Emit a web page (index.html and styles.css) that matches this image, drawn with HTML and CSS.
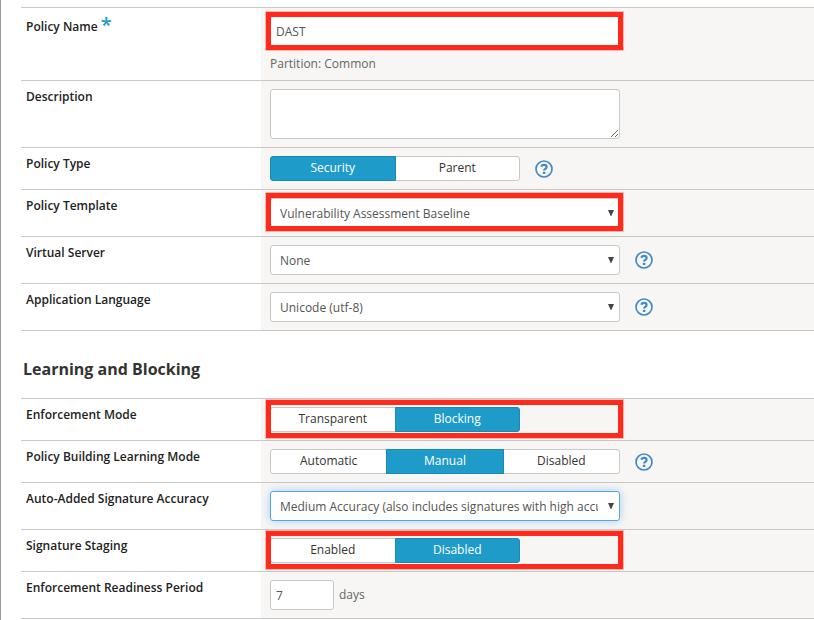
FILE: index.html
```html
<!DOCTYPE html>
<html lang="en">
<head>
<meta charset="utf-8">
<title>Create Policy</title>
<link rel="stylesheet" href="styles.css">
</head>
<body>
<svg class="defs" aria-hidden="true">
  <symbol id="help" viewBox="0 0 18 18">
    <circle cx="9" cy="9" r="8" fill="none" stroke="currentColor" stroke-width="1.7"/>
    <path d="M6.400 6.800C6.700 5.500 7.700 4.900 9 4.900c1.500 0 2.600.8 2.600 2.100 0 1.900-2.500 1.800-2.500 3.600" fill="none" stroke="currentColor" stroke-width="2.200"/>
    <rect x="7.900" y="11.700" width="2.400" height="2.400" rx=".5" fill="currentColor"/>
  </symbol>
  <symbol id="arrow" viewBox="0 0 6 6"><path d="M0 0h6L3.300 6h-.6z" fill="currentColor"/></symbol>
</svg>
<form class="page">
  <section class="rows">
    <div class="row">
      <div class="name name-required"><label for="policy-name">Policy Name</label><span class="required">*</span></div>
      <div class="value">
        <div class="field mark"><input class="box" id="policy-name" type="text" value="DAST"></div>
        <p class="note">Partition: Common</p>
      </div>
    </div>
    <div class="row">
      <div class="name"><label for="description">Description</label></div>
      <div class="value"><div class="field"><textarea class="box area" id="description"></textarea></div></div>
    </div>
    <div class="row">
      <div class="name" id="type-label">Policy Type</div>
      <div class="value line">
        <div class="segments pair" role="group" aria-labelledby="type-label"><button class="segment" type="button" aria-pressed="true">Security</button><button class="segment" type="button" aria-pressed="false">Parent</button></div>
        <button class="help" type="button" aria-label="Help"><svg><use href="#help"/></svg></button>
      </div>
    </div>
    <div class="row">
      <div class="name"><label for="template">Policy Template</label></div>
      <div class="value"><div class="field mark mark-select"><select class="box select" id="template"><option>Vulnerability Assessment Baseline</option></select><svg class="arrow"><use href="#arrow"/></svg></div></div>
    </div>
    <div class="row">
      <div class="name"><label for="server">Virtual Server</label></div>
      <div class="value line">
        <div class="field"><select class="box select" id="server"><option>None</option></select><svg class="arrow"><use href="#arrow"/></svg></div>
        <button class="help" type="button" aria-label="Help"><svg><use href="#help"/></svg></button>
      </div>
    </div>
    <div class="row">
      <div class="name"><label for="language">Application Language</label></div>
      <div class="value line">
        <div class="field"><select class="box select" id="language"><option>Unicode (utf-8)</option></select><svg class="arrow"><use href="#arrow"/></svg></div>
        <button class="help" type="button" aria-label="Help"><svg><use href="#help"/></svg></button>
      </div>
    </div>
  </section>
  <h2 class="heading">Learning and Blocking</h2>
  <section class="rows">
    <div class="row">
      <div class="name" id="mode-label">Enforcement Mode</div>
      <div class="value"><div class="field mark mark-segments"><div class="segments pair" role="group" aria-labelledby="mode-label"><button class="segment" type="button" aria-pressed="false">Transparent</button><button class="segment" type="button" aria-pressed="true">Blocking</button></div></div></div>
    </div>
    <div class="row">
      <div class="name" id="learning-label">Policy Building Learning Mode</div>
      <div class="value line">
        <div class="field segments" role="group" aria-labelledby="learning-label"><button class="segment" type="button" aria-pressed="false">Automatic</button><button class="segment" type="button" aria-pressed="true">Manual</button><button class="segment" type="button" aria-pressed="false">Disabled</button></div>
        <button class="help" type="button" aria-label="Help"><svg><use href="#help"/></svg></button>
      </div>
    </div>
    <div class="row">
      <div class="name"><label for="accuracy">Auto-Added Signature Accuracy</label></div>
      <div class="value"><div class="field"><select class="box select active" id="accuracy"><option>Medium Accuracy (also includes signatures with high accuracy)</option></select><svg class="arrow"><use href="#arrow"/></svg></div></div>
    </div>
    <div class="row">
      <div class="name" id="staging-label">Signature Staging</div>
      <div class="value"><div class="field mark mark-segments"><div class="segments pair" role="group" aria-labelledby="staging-label"><button class="segment" type="button" aria-pressed="false">Enabled</button><button class="segment" type="button" aria-pressed="true">Disabled</button></div></div></div>
    </div>
    <div class="row">
      <div class="name"><label for="period">Enforcement Readiness Period</label></div>
      <div class="value days"><input class="box short" id="period" type="text" value="7"><span>days</span></div>
    </div>
  </section>
</form>
</body>
</html>
```
FILE: styles.css
```css
* {
  box-sizing: border-box;
}

body {
  margin: 0;
  background: #fff;
  color: #222;
  font: 12px/18px "Open Sans", "Noto Sans", sans-serif;
}

button,
input,
select,
textarea {
  font: inherit;
  margin: 0;
}

.defs {
  position: absolute;
  width: 0;
  height: 0;
}

.page {
  min-height: 100vh;
  padding: 7px 0 0 20px;
  border-left: 1px solid #999;
}

.rows {
  border-bottom: 1px solid #c8c8c8;
}

.row {
  display: grid;
  grid-template-columns: 240px 1fr;
  border-top: 1px solid #c8c8c8;
}

.name {
  padding: 7px 5px 0;
  font-weight: 600;
}

.name-required {
  display: flex;
  align-items: flex-start;
  gap: 3px;
  padding-top: 10px;
}

.required {
  color: #1f9bca;
  font-size: 20px;
  line-height: 14px;
}

.value {
  padding: 8px 9px;
  background: #f7f6f5;
  color: #666;
}

.line {
  display: flex;
  align-items: center;
  gap: 15px;
}

.field {
  position: relative;
  width: 350px;
  max-width: 100%;
}

.box {
  display: block;
  width: 100%;
  height: 30px;
  padding: 0 5px;
  border: 1px solid #c8c8c8;
  border-radius: 3px;
  outline: 0;
  background: #fff;
  color: #555;
}

.area {
  height: 50px;
  resize: both;
}

.select {
  appearance: none;
  padding: 2px 21px 0 9px;
}

.active {
  border-color: #5aa7e0;
  box-shadow: 0 0 8px rgba(82, 168, 236, 0.5);
}

.arrow {
  position: absolute;
  top: 12px;
  right: 6px;
  width: 6px;
  height: 6px;
  color: #444;
  pointer-events: none;
}

.note {
  margin: 9px 0 -1px;
}

.segments {
  display: flex;
}

.pair {
  width: 250px;
}

.segment {
  flex: 1 1 0;
  height: 25px;
  padding: 0 0 2px;
  border: 1px solid #c8c8c8;
  background: #fff;
  color: #333;
}

.segment + .segment {
  margin-left: -1px;
}

.segment:first-child {
  border-radius: 3px 0 0 3px;
}

.segment:last-child {
  border-radius: 0 3px 3px 0;
}

.segment[aria-pressed="true"] {
  z-index: 1;
  border-color: #178ab5;
  background: #1f9bca;
  color: #fff;
}

.help {
  width: 18px;
  height: 18px;
  padding: 0;
  border: 0;
  background: none;
  color: #428bca;
}

.help svg {
  display: block;
  width: 18px;
  height: 18px;
}

.mark::after {
  content: "";
  position: absolute;
  z-index: 2;
  inset: -4px -3px -4px -4px;
  border: 5px solid #ff2a1c;
  box-shadow: 0 0 0 1px rgba(255, 42, 28, 0.3);
  pointer-events: none;
}

.mark-select::after {
  top: -5px;
  bottom: -3px;
}

.mark-segments::after {
  top: -7px;
  bottom: -6px;
}

.days {
  display: flex;
  align-items: center;
  gap: 5px;
}

.short {
  width: 64px;
}

.heading {
  margin: 0;
  padding: 26px 2px 17px;
  color: #333;
  font-size: 16px;
  line-height: 24px;
}
```
